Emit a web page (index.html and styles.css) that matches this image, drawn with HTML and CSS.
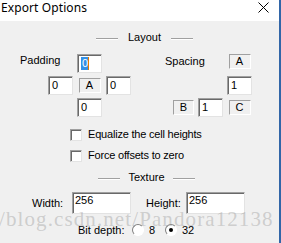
FILE: index.html
```html
<!DOCTYPE html>
<html lang="en">
<head>
	<meta charset="UTF-8">
	<title>Export Options</title>
	<link rel="stylesheet" href="styles.css">
</head>
<body>
	<div class="window">
		<div class="titlebar">
			<span class="title">Export Options</span>
			<svg class="close" width="11" height="11" viewBox="0 0 11 11">
				<path d="M0.5 0.5L10.5 10.5M10.5 0.5L0.5 10.5" stroke="#000" stroke-width="1" fill="none"/>
			</svg>
		</div>
		<div class="content">
			<div class="group-head head-layout">
				<span class="rule"></span>
				<span class="group-title">Layout</span>
				<span class="rule"></span>
			</div>

			<div class="layout-row">
				<div class="pad-grid">
					<span class="grid-label">Padding</span>
					<div class="field pad-top"><span class="sel">0</span></div>
					<div class="field pad-left">0</div>
					<div class="tag pad-tag">A</div>
					<div class="field pad-right">0</div>
					<div class="field pad-bottom">0</div>
				</div>
				<div class="spc-grid">
					<span class="grid-label spc-label">Spacing</span>
					<div class="tag spc-a">A</div>
					<div class="field spc-top">1</div>
					<div class="tag spc-b">B</div>
					<div class="field spc-mid">1</div>
					<div class="tag spc-c">C</div>
				</div>
			</div>

			<div class="checks">
				<div class="check"><span class="box"></span>Equalize the cell heights</div>
				<div class="check"><span class="box"></span>Force offsets to zero</div>
			</div>

			<div class="group-head head-texture">
				<span class="rule"></span>
				<span class="group-title">Texture</span>
				<span class="rule"></span>
			</div>

			<div class="size-row">
				<span class="size-label">Width:</span>
				<div class="field wide">256</div>
				<span class="size-label second">Height:</span>
				<div class="field wide">256</div>
			</div>

			<div class="depth-row">
				<span class="depth-label">Bit depth:</span>
				<span class="radio"></span>
				<span class="radio-text">8</span>
				<span class="radio on"></span>
				<span class="radio-text">32</span>
			</div>
		</div>
		<div class="watermark">/blog.csdn.net/Pandora12138</div>
	</div>
</body>
</html>
```

FILE: styles.css
```css
body {
	margin: 0;
	font-family: "Liberation Sans", Arial, sans-serif;
	font-size: 11px;
	line-height: 13px;
	color: #000;
}
.window {
	position: relative;
	width: 279px;
	height: 243px;
	border-right: 2px solid #3266a8;
	overflow: hidden;
	background: #f0f0f0;
}
.titlebar {
	height: 21px;
	background: #fff;
	display: flex;
	justify-content: space-between;
	align-items: flex-start;
	padding: 0 10px 0 1px;
}
.title {
	font-family: "Noto Sans", sans-serif;
	font-size: 12px;
	line-height: 16px;
	letter-spacing: 0.1px;
}
.close {
	margin-top: 2px;
}
.content {
	height: 222px;
}

/* group headers */
.group-head {
	display: flex;
	align-items: flex-start;
}
.head-layout {
	padding: 10px 0 0 96px;
}
.head-texture {
	padding: 9px 0 0 98px;
}
.rule {
	width: 22px;
	margin-top: 7px;
	border-top: 1px solid #a0a0a0;
	border-bottom: 1px solid #fff;
}
.group-title {
	width: 53px;
	text-align: center;
}

/* layout fields */
.layout-row {
	display: flex;
	padding: 10px 0 0 20px;
	gap: 34px;
}
.pad-grid {
	display: grid;
	grid-template-columns: 24px 25px 25px 25px;
	grid-template-rows: 19px 19px 19px;
	column-gap: 4px;
	row-gap: 3px;
}
.spc-grid {
	display: grid;
	grid-template-columns: 29px 25px 25px;
	grid-template-rows: 19px 19px 19px;
	column-gap: 4px;
	row-gap: 3px;
}
.grid-label {
	grid-row: 1;
	grid-column: 1 / 3;
	white-space: nowrap;
}
.spc-label {
	margin-top: 1px;
}
.field {
	box-sizing: border-box;
	height: 19px;
	background: #fff;
	border: 1px solid;
	border-color: #a0a0a0 #e3e3e3 #e3e3e3 #a0a0a0;
	box-shadow: inset 1px 1px 0 #696969;
	padding: 2px 0 0 3px;
}
.sel {
	display: inline-block;
	background: #3390e6;
	color: #fff;
	padding: 0 0 0 1px;
	border-right: 1px solid #e07b00;
}
.tag {
	box-sizing: border-box;
	width: 22px;
	height: 15px;
	border: 1px solid;
	border-color: #a0a0a0 #fff #fff #a0a0a0;
	text-align: center;
	line-height: 13px;
	align-self: center;
}
.pad-top { grid-row: 1; grid-column: 3; }
.pad-left { grid-row: 2; grid-column: 2; }
.pad-tag { grid-row: 2; grid-column: 3; justify-self: center; }
.pad-right { grid-row: 2; grid-column: 4; }
.pad-bottom { grid-row: 3; grid-column: 3; }

.spc-a { grid-row: 1; grid-column: 3; align-self: start; justify-self: center; }
.spc-top { grid-row: 2; grid-column: 3; }
.spc-b { grid-row: 3; grid-column: 1; justify-self: end; width: 21px; }
.spc-mid { grid-row: 3; grid-column: 2; }
.spc-c { grid-row: 3; grid-column: 3; justify-self: center; }

/* checkboxes */
.checks {
	padding: 11px 0 0 70px;
	display: flex;
	flex-direction: column;
	gap: 8px;
	letter-spacing: -0.2px;
}
.check {
	display: flex;
	align-items: center;
	gap: 6px;
}
.box {
	box-sizing: border-box;
	width: 12px;
	height: 12px;
	background: #fff;
	border: 1px solid;
	border-color: #a0a0a0 #e3e3e3 #e3e3e3 #a0a0a0;
	box-shadow: inset 1px 1px 0 #696969;
}

/* texture */
.size-row {
	display: flex;
	align-items: center;
	padding: 8px 0 0 32px;
}
.size-label {
	width: 40px;
}
.size-label.second {
	margin-left: 15px;
}
.field.wide {
	width: 59px;
	height: 22px;
	padding: 1px 0 0 2px;
}
.depth-row {
	display: flex;
	align-items: center;
	padding: 10px 0 0 78px;
	line-height: 11px;
}
.depth-label {
	width: 54px;
}
.radio {
	box-sizing: border-box;
	width: 12px;
	height: 12px;
	border-radius: 50%;
	background: #fff;
	border: 1px solid;
	border-color: #808080 #fff #fff #808080;
	display: flex;
	align-items: center;
	justify-content: center;
}
.radio.on::after {
	content: "";
	width: 4px;
	height: 4px;
	border-radius: 50%;
	background: #000;
}
.radio-text {
	margin-left: 5px;
	width: 6px;
}
.radio-text + .radio {
	margin-left: 10px;
}

.watermark {
	position: absolute;
	left: -1px;
	top: 212px;
	font-family: "Liberation Serif", serif;
	font-size: 21px;
	line-height: 14px;
	letter-spacing: 1.1px;
	color: rgba(150, 150, 150, 0.4);
	white-space: nowrap;
	pointer-events: none;
}
```
